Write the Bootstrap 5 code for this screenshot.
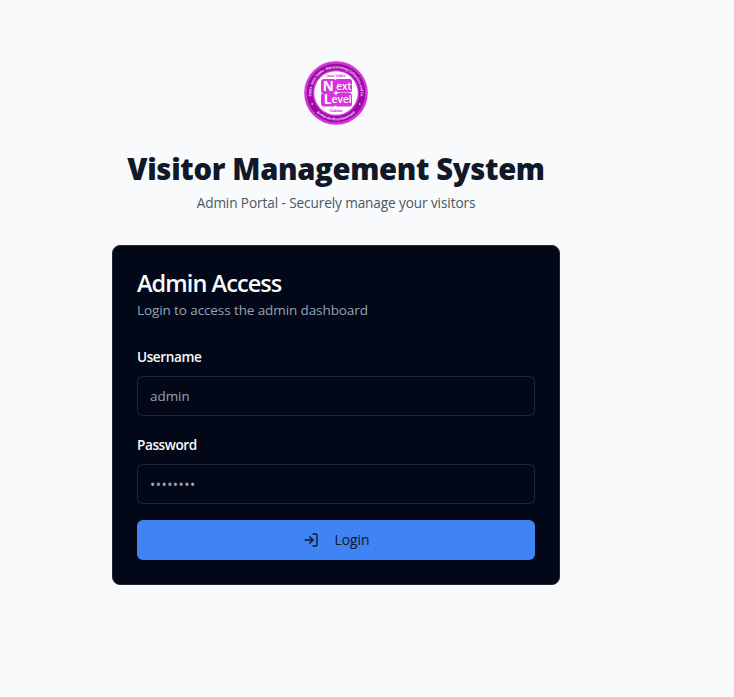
<!DOCTYPE html>
<html lang="en">
<head>
<meta charset="utf-8">
<meta name="viewport" content="width=device-width, initial-scale=1">
<title>Visitor Management System</title>
<link href="https://cdn.jsdelivr.net/npm/bootstrap@5.3.0/dist/css/bootstrap.min.css" rel="stylesheet">
<style>
body{font-family:"Open Sans","Noto Sans",sans-serif;font-size:14px;line-height:20px;background:#f9fafb;background:#f8fafc}
.portal{width:672px;padding-top:61px}
.portal-inner{width:448px}
.logo{width:64px;height:64px}
.heading{font-size:29.2px;line-height:36px;font-weight:800;color:#111827;margin:26px 0 0;letter-spacing:-.33px;white-space:nowrap}
.tagline{color:#4b5563;margin:6px 0 32px;line-height:20px;font-size:13.6px;letter-spacing:-.1px}
.panel{background:#020817;border:1px solid #1e293b;border-radius:8px;height:340px;padding:24px}
.panel-title{color:#f8fafc;font-size:23.5px;line-height:24px;font-weight:600;letter-spacing:-.93px;margin:1px 0 5px}
.panel-sub{color:#94a3b8;margin:0 0 30px;font-size:13.5px;letter-spacing:-.1px}
.form-label{color:#f8fafc;font-weight:600;font-size:13.6px;line-height:14px;margin:0 0 12px;letter-spacing:-.42px}
.field-user{margin-bottom:22px}
.form-control,.form-control:focus{background:transparent;border:1px solid #1e293b;border-radius:6px;height:40px;padding:8px 12px;font-size:13.4px;line-height:20px;color:#94a3b8}
.form-control::placeholder{color:#94a3b8;opacity:1}
#password{font-size:14px;letter-spacing:.45px}
.btn-login,.btn-login:hover{background:#3f83f4;border:0;border-radius:6px;height:40px;font-size:13.8px;font-weight:500;color:#0f172a;gap:16px}
</style>
<script src="https://cdn.jsdelivr.net/npm/bootstrap@5.3.0/dist/js/bootstrap.bundle.min.js"></script>
</head>
<body>
<main class="portal d-flex justify-content-center">
<div class="portal-inner">
<header class="d-flex flex-column align-items-center text-center">
<svg class="logo" viewBox="0 0 64 64" font-family="Open Sans, sans-serif" font-weight="700" text-anchor="middle">
<defs><path id="arcTop" d="M8.3 39A24.7 24.7 0 1 1 55.7 39"/><path id="arcBottom" d="M9 47A27.5 27.5 0 0 0 55 47"/></defs>
<circle cx="32" cy="32" r="31.8" fill="#d633dc"/>
<circle cx="32" cy="32" r="29.3" fill="#9b0aa2"/>
<circle cx="32" cy="32" r="23.2" fill="#d633dc"/>
<circle cx="32" cy="32" r="21.8" fill="#fff"/>
<text font-size="3.6" fill="#f5d9f7"><textPath href="#arcTop" startOffset="50%" textLength="84">Clubs · Jeux Vidéo · Rétrocaming Collection and Co</textPath></text>
<text font-size="3.6" fill="#f5d9f7"><textPath href="#arcBottom" startOffset="50%" textLength="43">Arrêté de divertissement</textPath></text>
<circle cx="8.2" cy="43" r=".8" fill="#fff"/><circle cx="55.8" cy="43" r=".8" fill="#fff"/>
<g fill="#d633dc">
<rect x="17" y="18" width="15" height="14.4" rx="3"/><rect x="31" y="18" width="17" height="13.5" rx="2.5"/>
<rect x="17" y="32" width="15" height="13.5" rx="3"/><rect x="31" y="32" width="17" height="13.5" rx="2.5"/>
<text x="32" y="16.3" font-size="3.6" textLength="19">Jeux Vidéo</text>
<text x="32" y="50.7" font-size="3.6" textLength="13">Clubiste</text>
</g>
<g fill="#fff">
<text x="24.2" y="29.8" font-size="13.5">N</text><text x="39.8" y="29.2" font-size="11.5" font-weight="600" textLength="15.2" lengthAdjust="spacingAndGlyphs">ext</text>
<text x="23.6" y="43.3" font-size="13.5">L</text><text x="37.6" y="42" font-size="11.2" font-weight="600" textLength="20" lengthAdjust="spacingAndGlyphs">evel</text>
<path d="M32 28.9l.8 2.3 2.3.8-2.3.8-.8 2.3-.8-2.3-2.3-.8 2.3-.8z"/>
</g>
</svg>
<h1 class="heading">Visitor Management System</h1>
<p class="tagline">Admin Portal - Securely manage your visitors</p>
</header>
<section class="panel">
<h2 class="panel-title">Admin Access</h2>
<p class="panel-sub">Login to access the admin dashboard</p>
<form>
<div class="field-user">
<label class="form-label d-block" for="username">Username</label>
<input class="form-control shadow-none" id="username" placeholder="admin">
</div>
<div class="mb-3">
<label class="form-label d-block" for="password">Password</label>
<input class="form-control shadow-none" id="password" type="password" placeholder="••••••••">
</div>
<button class="btn btn-login w-100 d-flex align-items-center justify-content-center" type="button">
<svg width="16" height="16" viewBox="0 0 24 24" fill="none" stroke="currentColor" stroke-width="2" stroke-linecap="round" stroke-linejoin="round"><path d="M15 3h4a2 2 0 0 1 2 2v14a2 2 0 0 1-2 2h-4"/><path d="M10 17l5-5-5-5"/><path d="M15 12H3"/></svg>
<span>Login</span>
</button>
</form>
</section>
</div>
</main>
</body>
</html>
